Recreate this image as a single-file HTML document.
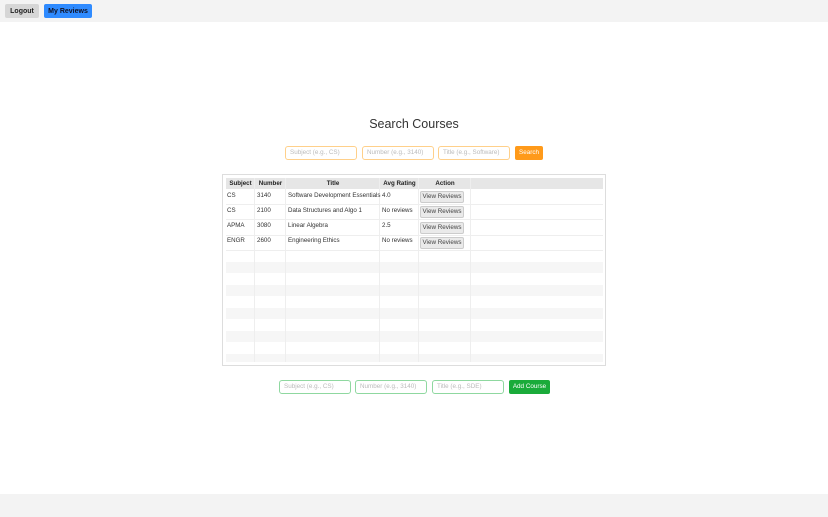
<!DOCTYPE html>
<html><head><style>
*{box-sizing:border-box;margin:0;padding:0}
body{width:828px;height:517px;position:relative;background:#fff;font-family:"Liberation Sans",sans-serif;font-size:7px;color:#333;overflow:hidden}
.a{position:absolute}
.top{left:0;top:0;width:828px;height:22px;background:#f3f3f3}
.foot{left:0;top:494px;width:828px;height:23px;background:#f3f3f3}
.btn{position:absolute;display:flex;align-items:center;justify-content:center;border-radius:2px;font-size:7px;line-height:1}
.inp{position:absolute;height:14px;border-radius:3px;background:#fff;color:#bbb;font-size:6.3px;padding:0 4px;display:flex;align-items:center;line-height:1}
.o{border:1px solid #ffd08a}
.g{border:1px solid #8fd8a0}
.cell{position:absolute;border-right:1px solid #eee;}
.txt{position:absolute;font-size:6.2px;color:#333;white-space:nowrap;line-height:1}
.vr{position:absolute;left:420px;width:44px;height:12px;background:#eaeaea;border:1px solid #ccc;border-radius:2px;font-size:6.3px;display:flex;align-items:center;justify-content:center;line-height:1;color:#444}
</style></head><body>
<div class="a top"></div>
<div class="btn" style="left:5px;top:4px;width:34px;height:14px;background:#d6d6d6;color:#222;font-weight:bold">Logout</div>
<div class="btn" style="left:44px;top:4px;width:48px;height:14px;background:#2f8bff;color:#112;font-weight:bold">My Reviews</div>
<div class="a" style="left:0;top:116px;width:828px;text-align:center;font-size:12.5px;color:#333;line-height:16px">Search Courses</div>
<div class="inp o" style="left:285px;top:146px;width:72px">Subject (e.g., CS)</div>
<div class="inp o" style="left:362px;top:146px;width:72px">Number (e.g., 3140)</div>
<div class="inp o" style="left:438px;top:146px;width:72px">Title (e.g., Software)</div>
<div class="btn" style="left:515px;top:146px;width:28px;height:14px;background:#ff9a1a;color:#fff;font-size:6.3px">Search</div>

<div class="a" style="left:222px;top:174px;width:384px;height:192px;border:1px solid #ddd"></div>
<div class="a" style="left:226px;top:178px;width:377px;height:11px;background:#e6e6e6"></div>
<div class="a" style="left:226px;top:262px;width:377px;height:11px;background:#f6f6f6"></div>
<div class="a" style="left:226px;top:285px;width:377px;height:11px;background:#f6f6f6"></div>
<div class="a" style="left:226px;top:308px;width:377px;height:11px;background:#f6f6f6"></div>
<div class="a" style="left:226px;top:331px;width:377px;height:11px;background:#f6f6f6"></div>
<div class="a" style="left:226px;top:354px;width:377px;height:8px;background:#f6f6f6"></div>
<div class="a" style="left:226px;top:204px;width:377px;height:1px;background:#eee"></div>
<div class="a" style="left:226px;top:219px;width:377px;height:1px;background:#eee"></div>
<div class="a" style="left:226px;top:235px;width:377px;height:1px;background:#eee"></div>
<div class="a" style="left:226px;top:250px;width:377px;height:1px;background:#eee"></div>
<div class="cell" style="left:226px;top:178px;width:29px;height:184px"></div>
<div class="cell" style="left:255px;top:178px;width:31px;height:184px"></div>
<div class="cell" style="left:286px;top:178px;width:94px;height:184px"></div>
<div class="cell" style="left:380px;top:178px;width:39px;height:184px"></div>
<div class="cell" style="left:419px;top:178px;width:52px;height:184px"></div>
<div class="txt" style="left:226px;top:181px;width:29px;text-align:center;font-weight:bold;color:#222">Subject</div>
<div class="txt" style="left:255px;top:181px;width:31px;text-align:center;font-weight:bold;color:#222">Number</div>
<div class="txt" style="left:286px;top:181px;width:94px;text-align:center;font-weight:bold;color:#222">Title</div>
<div class="txt" style="left:380px;top:181px;width:39px;text-align:center;font-weight:bold;color:#222">Avg Rating</div>
<div class="txt" style="left:419px;top:181px;width:52px;text-align:center;font-weight:bold;color:#222">Action</div>

<div class="txt" style="left:227px;top:193px">CS</div><div class="txt" style="left:257px;top:193px">3140</div><div class="txt" style="left:288px;top:193px">Software Development Essentials</div><div class="txt" style="left:382px;top:193px">4.0</div><div class="vr" style="top:191px">View Reviews</div>
<div class="txt" style="left:227px;top:208px">CS</div><div class="txt" style="left:257px;top:208px">2100</div><div class="txt" style="left:288px;top:208px">Data Structures and Algo 1</div><div class="txt" style="left:382px;top:208px">No reviews</div><div class="vr" style="top:206px">View Reviews</div>
<div class="txt" style="left:227px;top:223px">APMA</div><div class="txt" style="left:257px;top:223px">3080</div><div class="txt" style="left:288px;top:223px">Linear Algebra</div><div class="txt" style="left:382px;top:223px">2.5</div><div class="vr" style="top:222px">View Reviews</div>
<div class="txt" style="left:227px;top:238px">ENGR</div><div class="txt" style="left:257px;top:238px">2600</div><div class="txt" style="left:288px;top:238px">Engineering Ethics</div><div class="txt" style="left:382px;top:238px">No reviews</div><div class="vr" style="top:237px">View Reviews</div>

<div class="inp g" style="left:279px;top:380px;width:72px">Subject (e.g., CS)</div>
<div class="inp g" style="left:355px;top:380px;width:72px">Number (e.g., 3140)</div>
<div class="inp g" style="left:432px;top:380px;width:72px">Title (e.g., SDE)</div>
<div class="btn" style="left:509px;top:380px;width:41px;height:14px;background:#1aab3a;color:#fff;font-size:6.3px">Add Course</div>
<div class="a foot"></div>
</body></html>
